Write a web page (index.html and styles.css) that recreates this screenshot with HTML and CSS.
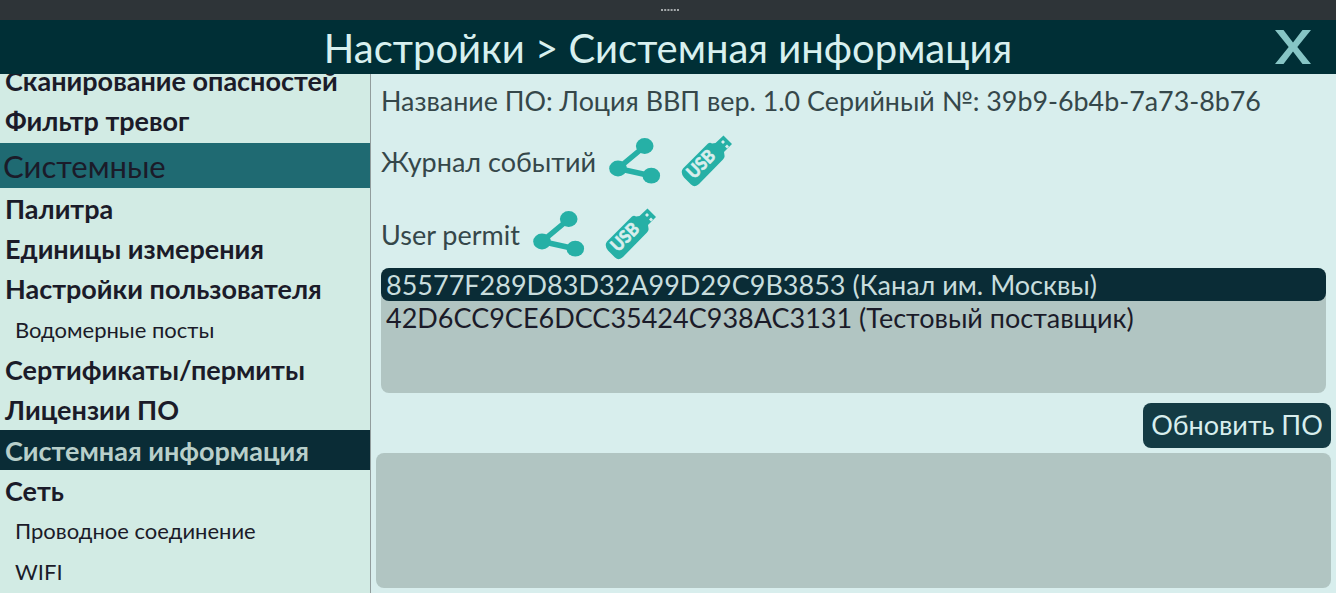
FILE: index.html
```html
<!DOCTYPE html>
<html lang="ru">
<head>
<meta charset="utf-8">
<title>Системная информация</title>
<link rel="stylesheet" href="styles.css">
</head>
<body>
<svg width="0" height="0" class="defs">
  <symbol id="share" viewBox="0 0 52 50">
    <path d="M36 10 9 32.500 43 40" fill="none" stroke="#26b0a6" stroke-width="5.500"/>
    <ellipse cx="35.700" cy="10" rx="8.800" ry="7.900"/><ellipse cx="9" cy="32.500" rx="8.800" ry="7.900"/><ellipse cx="42.300" cy="39.700" rx="8.800" ry="7.900"/>
  </symbol>
  <symbol id="usb" viewBox="0 0 52 52">
    <path fill-rule="evenodd" d="M2 33.500 27 8.500Q29 7 31 8.500L34.500 8 42.500 .5 51 9 43 17 43.500 20.500Q44 22.500 42 24.500L18 49Q14 53 10 49.500L3 42.500Q-1 37.500 2 33.500ZM40 7 42 9 44 7 42 5ZM44 11.500 46 13.500 48 11.500 46 9.500Z"/>
    <text transform="translate(13 44.800) rotate(-45)" textLength="32" lengthAdjust="spacingAndGlyphs" class="usb-text">USB</text>
  </symbol>
</svg>
<div class="handle"><svg class="dots" viewBox="0 0 18 2"><path d="M0 1H18" stroke="#a4a8aa" stroke-width="2" stroke-dasharray="2 1.200"/></svg></div>
<header class="header"><h1>Настройки &gt; Системная информация</h1>
<svg class="close" viewBox="0 0 36 34"><path d="M0 0H8.500L18 12.500 27.500 0H36L22.300 17 36 34H27.500L18 21.500 8.500 34H0L13.700 17Z"/></svg></header>
<main class="main">
<nav class="nav">
  <div class="item"><span>Сканирование опасностей</span></div>
  <div class="item"><span>Фильтр тревог</span></div>
  <div class="item section"><span>Системные</span></div>
  <div class="item"><span>Палитра</span></div>
  <div class="item"><span>Единицы измерения</span></div>
  <div class="item"><span>Настройки пользователя</span></div>
  <div class="item sub"><span>Водомерные посты</span></div>
  <div class="item"><span>Сертификаты/пермиты</span></div>
  <div class="item"><span>Лицензии ПО</span></div>
  <div class="item active"><span>Системная информация</span></div>
  <div class="item"><span>Сеть</span></div>
  <div class="item sub"><span>Проводное соединение</span></div>
  <div class="item sub"><span>WIFI</span></div>
</nav>
<section class="content">
  <div class="info">Название ПО: Лоция ВВП вер. 1.0 Серийный №: 39b9-6b4b-7a73-8b76</div>
  <div class="row"><span class="label">Журнал событий</span><svg class="share"><use href="#share"/></svg><svg class="usb"><use href="#usb"/></svg></div>
  <div class="row"><span class="label">User permit</span><svg class="share"><use href="#share"/></svg><svg class="usb"><use href="#usb"/></svg></div>
  <div class="list">
    <div class="entry selected">85577F289D83D32A99D29C9B3853 (Канал им. Москвы)</div>
    <div class="entry">42D6CC9CE6DCC35424C938AC3131 (Тестовый поставщик)</div>
  </div>
  <button class="update">Обновить ПО</button>
  <div class="log"></div>
</section>
</main>
</body>
</html>
```
FILE: styles.css
```css
* { box-sizing: border-box; }
body { margin: 0; width: 1336px; height: 593px; overflow: hidden; display: flex; flex-direction: column; background: #d8eeed; font-family: Lato, sans-serif; color: #35474a; }
.defs { position: absolute; }
.handle { height: 20px; flex: none; background: #2e3438; display: flex; justify-content: center; padding: 9px 0 0 3px; }
.dots { width: 18px; height: 2px; }
.header { height: 54px; flex: none; background: #002f36; display: flex; align-items: center; padding-right: 25px; }
.header h1 { flex: 1; margin: 0 0 0 61px; text-align: center; font-size: 40px; line-height: 52px; padding-top: 2px; font-weight: 400; color: #d8f0ef; white-space: nowrap; }
.close { width: 36px; height: 34px; fill: #86c5c5; }
.main { flex: 1; display: flex; min-height: 0; }
.nav { width: 371px; flex: none; background: #d2ebe4; border-right: 1px solid #929d9d; overflow: hidden; display: flex; flex-direction: column; justify-content: flex-end; padding-bottom: 2px; }
.item { height: 40.33px; flex: none; padding-left: 5px; font-size: 27px; line-height: 41px; font-weight: 700; color: #1b1b29; white-space: nowrap; }
.section { height: 45px; margin-top: 2px; padding-left: 3px; line-height: 46px; font-size: 31px; font-weight: 400; background: #1f6a72; }
.sub { padding-left: 15px; font-size: 22px; font-weight: 400; }
.active { background: #0a2c36; color: #b8cfca; }
.content { flex: 1; min-width: 0; display: flex; flex-direction: column; padding: 0 5px 5px; }
.info { height: 50px; padding-left: 5px; font-size: 26.85px; line-height: 53px; white-space: nowrap; }
.row { height: 73px; display: flex; align-items: center; padding-left: 5px; font-size: 27px; white-space: nowrap; }
.label { padding-top: 2px; }
.share { width: 52px; height: 50px; margin-left: 13px; fill: #26b0a6; }
.usb { width: 52px; height: 52px; margin-left: 20px; fill: #26b0a6; }
.usb-text { font-size: 18px; font-weight: 900; fill: #d8eeed; stroke: #d8eeed; stroke-width: .5px; }
.list { margin: -2px 5px 0; height: 125px; flex: none; border-radius: 8px; background: #b1c5c2; color: #1b1b29; }
.entry { height: 33px; padding-left: 5px; font-size: 27px; line-height: 34px; white-space: nowrap; }
.selected { background: #0a2c36; color: #c8dddd; border-radius: 8px; }
.update { align-self: flex-end; width: 188px; height: 45px; flex: none; margin: 10px 0 5px; padding: 0 0 1px; border: 0; border-radius: 8px; background: #143b44; color: #d8eeed; font: 27px/44px Lato, sans-serif; }
.log { flex: 1; background: #b1c5c2; border-radius: 8px; }
```
